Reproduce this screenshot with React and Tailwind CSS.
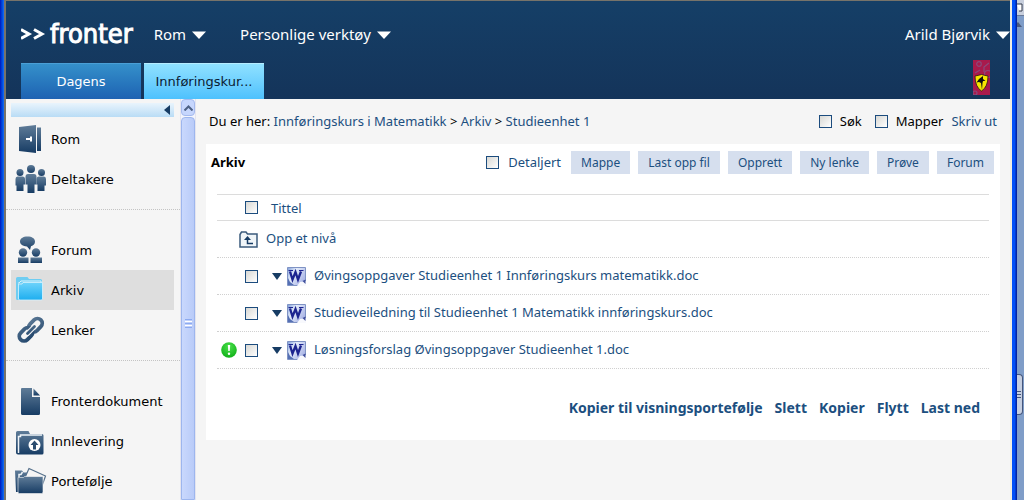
import React, { useState } from 'react'

const toolbarButtons = ['Mappe', 'Last opp fil', 'Opprett', 'Ny lenke', 'Prøve', 'Forum']

const files = [
  { id: 1, name: 'Øvingsoppgaver Studieenhet 1 Innføringskurs matematikk.doc', isNew: false },
  { id: 2, name: 'Studieveiledning til Studieenhet 1 Matematikk innføringskurs.doc', isNew: false },
  { id: 3, name: 'Løsningsforslag Øvingsoppgaver Studieenhet 1.doc', isNew: true },
]

const footerLinks = ['Kopier til visningsportefølje', 'Slett', 'Kopier', 'Flytt', 'Last ned']

const sidebarGroups = [
  [
    { label: 'Rom', icon: DoorIcon },
    { label: 'Deltakere', icon: PeopleIcon },
  ],
  [
    { label: 'Forum', icon: ForumIcon },
    { label: 'Arkiv', icon: FolderIcon, active: true },
    { label: 'Lenker', icon: ChainIcon },
  ],
  [
    { label: 'Fronterdokument', icon: DocumentIcon },
    { label: 'Innlevering', icon: HandInIcon },
    { label: 'Portefølje', icon: PortfolioIcon },
  ],
]

function DoorIcon() {
  return (
    <svg width="32" height="32" viewBox="0 0 32 32" fill="url(#steel)">
      <path d="M4 3 21 1v28L4 27z" />
      <path d="M22 3.500h4V27h-4z" />
      <path d="M11 14h4v-1.500h2v5h-2V16h-4z" fill="#fff" />
    </svg>
  )
}

function PeopleIcon() {
  return (
    <svg width="32" height="32" viewBox="0 0 32 32" fill="url(#steel)">
      <circle cx="5" cy="8.500" r="3.500" />
      <circle cx="26.500" cy="8.500" r="3.500" />
      <path d="M2.500 12.500h5Q10 12.500 10 15v5.500H8.500V27h-7v-5.500H.5V15Q.5 12.500 2.500 12.500z" />
      <path d="M24 12.500h5q2 0 2 2.500v6.500h-1.500V27h-7v-6.500H21.500V15Q21.500 12.500 24 12.500z" />
      <circle cx="16" cy="5" r="4" />
      <path d="M13 10h6q2.500 0 2.500 3v7.500h-2v8.500h-7v-8.500h-2V13q0-3 2.500-3z" />
    </svg>
  )
}

function ForumIcon() {
  return (
    <svg width="32" height="32" viewBox="0 0 32 32" fill="url(#steel)">
      <path d="M12.500 1.500c4.500 0 7.500 2 7.500 5 0 2.500-1.500 4-4 4.700L15 15l-3-3.500c-4-.2-7-2-7-5s3-5 7.500-5z" />
      <circle cx="8" cy="17.500" r="4.200" />
      <circle cx="21" cy="17.500" r="4.200" />
      <path d="M3 22.500h10.500V28H3z" />
      <path d="M15.500 22.500H27V28H15.500z" />
    </svg>
  )
}

function FolderIcon() {
  return (
    <svg width="32" height="32" viewBox="0 0 32 32">
      <path d="M1 3.500Q1 2 2.500 2h10L14 4h11.500Q27 4 27 5.500V25H2.500Q1 25 1 23.500z" fill="#6fcdf2" />
      <path d="M3 8h1l2-2h20v2" fill="none" stroke="#d9f3fd" />
      <path d="M4 9h3l1-1.500h19.500V24q0 1-1.500 1H5Q3.500 25 3.500 24V9z" fill="url(#sky)" stroke="#d9f3fd" strokeWidth="0.800" />
    </svg>
  )
}

function ChainIcon() {
  return (
    <svg width="32" height="32" viewBox="0 0 32 32" fill="none" stroke="url(#steelFlat)" strokeWidth="3.800" strokeLinecap="round">
      <rect x="13" y="5.500" width="15" height="9.500" rx="4.750" transform="rotate(-45 20.500 10.250)" />
      <rect x="3.500" y="14.500" width="15" height="9.500" rx="4.750" transform="rotate(-45 11 19.250)" />
      <path d="M12.500 18.500l7-7" stroke="#f5f5f5" strokeWidth="5" />
      <path d="M12.500 18.500l7-7" strokeWidth="2.800" />
    </svg>
  )
}

function DocumentIcon() {
  return (
    <svg width="32" height="32" viewBox="0 0 32 32" fill="url(#steel)">
      <path d="M7 2h10v9h8v16.500q0 1.500-1.500 1.500h-16Q6 29 6 27.500V3q0-1 1-1z" />
      <path d="M18.500 2.500 25 9.500h-6.500z" />
    </svg>
  )
}

function HandInIcon() {
  return (
    <svg width="32" height="32" viewBox="0 0 32 32">
      <path d="M1 6.500Q1 5 2.500 5h11L15 8h12q1.500 0 1.500 1.500V27q0 1.500-1.500 1.500H3q-2 0-2-2z" fill="url(#steel)" />
      <path d="M3.500 27V10.500h2V9h21.500" fill="none" stroke="#eef3f7" strokeWidth="1.500" />
      <circle cx="19.500" cy="19" r="6" fill="#fff" />
      <path d="M19.500 14.500l4 4.500h-2.500v4.500h-3V19h-2.500z" fill="#2b4d70" />
    </svg>
  )
}

function PortfolioIcon() {
  return (
    <svg width="32" height="32" viewBox="0 0 32 32">
      <path d="M0 4.500h7l1.500 2h5V26H1z" fill="url(#steel)" />
      <path d="M10 11.500l4-9L30.500 10 25.500 24" fill="#f5f5f5" stroke="#56718c" strokeWidth="1.200" />
      <path d="M4 11V8.500h2L7.500 6" fill="none" stroke="#eef3f7" strokeWidth="1.500" />
      <path d="M3 11.500h5.500l1-1H28V26q0 1.500-1.500 1.500h-22Q3 27.500 3 26z" fill="url(#steel)" stroke="#f5f5f5" strokeWidth="0.600" />
    </svg>
  )
}

function IconGradients() {
  return (
    <svg width="0" height="0" className="absolute" aria-hidden="true">
      <defs>
        <linearGradient id="steel" x1="0" y1="0" x2="0" y2="1">
          <stop offset="0" stopColor="#5f7c98" />
          <stop offset="1" stopColor="#173c64" />
        </linearGradient>
        <linearGradient id="steelFlat" gradientUnits="userSpaceOnUse" x1="0" y1="0" x2="0" y2="32">
          <stop offset="0" stopColor="#5f7c98" />
          <stop offset="1" stopColor="#173c64" />
        </linearGradient>
        <linearGradient id="sky" x1="0" y1="0" x2="0" y2="1">
          <stop offset="0" stopColor="#6dd3fb" />
          <stop offset="1" stopColor="#1eaeef" />
        </linearGradient>
        <linearGradient id="word" x1="0" y1="0" x2="1" y2="0.600">
          <stop offset="0" stopColor="#7d9cd8" />
          <stop offset="0.400" stopColor="#e4ecfa" />
          <stop offset="1" stopColor="#a9b4e6" />
        </linearGradient>
        <radialGradient id="alert" cx="0.500" cy="0.300" r="0.700">
          <stop offset="0" stopColor="#4be04b" />
          <stop offset="1" stopColor="#10b018" />
        </radialGradient>
      </defs>
    </svg>
  )
}

function WordIcon() {
  return (
    <svg width="19" height="19" viewBox="0 0 19 19" className="shrink-0">
      <path d="M.5.500h18v18H.5z" fill="url(#word)" stroke="#7f93c4" />
      <path d="M1 18V11l2 4 4 3z" fill="#5570b4" />
      <path d="M10 19l3-4 6-1v5z" fill="#f8f9fd" />
      <path d="M15.500 14l3-1.500V17z" fill="#3f4f9c" />
      <path d="M3 4.500l2.500 8L8.500 5l2.500 7.500L14 4.500" fill="none" stroke="#1d2590" strokeWidth="2.300" />
      <path d="M1.500 3.500H6M12 3.500h4.500" stroke="#1d2590" strokeWidth="1.200" />
    </svg>
  )
}

function AlertIcon() {
  return (
    <svg width="16" height="16" viewBox="0 0 16 16" role="img" aria-label="Ny">
      <circle cx="8" cy="8" r="7.800" fill="url(#alert)" />
      <path d="M6.800 3h2.400l-.5 6H7.300z" fill="#fff" />
      <circle cx="8" cy="11.700" r="1.200" fill="#fff" />
    </svg>
  )
}

function UpFolderIcon() {
  return (
    <svg width="19" height="17" viewBox="0 0 19 17" fill="none" stroke="#3b5b7c" className="shrink-0">
      <path d="M1 3.500 2.500 1H7l1.500 2H18v13H1z" fill="#f0f5f8" strokeWidth="1.500" />
      <path d="M8.500 7v5.500H14" stroke="#173c64" strokeWidth="1.500" />
      <path d="M5 9l3.500-4L12 9z" fill="#173c64" stroke="none" />
    </svg>
  )
}

function Caret() {
  return (
    <svg width="14" height="8" viewBox="0 0 14 8">
      <path d="M0 .5h14L7 8z" fill="currentColor" />
    </svg>
  )
}

function Crest() {
  return (
    <svg width="17" height="35" viewBox="0 0 17 35">
      <path d="M0 0h17v35H0z" fill="#a81a4c" />
      <g fill="none" stroke="#8a4a7c" strokeWidth="1.200">
        <circle cx="6" cy="4" r="2.300" />
        <circle cx="15" cy="14" r="3.500" />
        <circle cx="2" cy="33" r="2" />
        <path d="M16 3l-5 4v5M2 13l5-3" />
      </g>
      <path d="M2 16q3-.5 6.500-1.500Q12 15.500 15 16q0 11-6.500 15Q2 27 2 16z" fill="#f6e600" stroke="#2a1a10" strokeWidth="0.800" />
      <path d="M3.500 22.500L6 19l4-3v3l2.500 2H10l-.5 2L9 30l-1-7-2-1z" fill="#111" />
    </svg>
  )
}

function Checkbox({ id, ...props }) {
  return (
    <input
      id={id}
      type="checkbox"
      className="size-[13px] shrink-0 appearance-none border border-[#1c4c7e] bg-linear-to-br from-[#d8d8d4] to-white checked:bg-[#1c4c7e]"
      {...props}
    />
  )
}

function Header() {
  return (
    <header className="flex h-[99px] flex-col justify-between border-t border-[#77736a] bg-linear-to-b from-[#153f67] to-[#14345a] text-white">
      <div className="flex h-[62px] items-center pt-2 pl-[15px] font-['Noto_Sans',sans-serif] text-[15px]">
        <a href="#" className="flex items-center gap-1">
          <svg width="25" height="14" viewBox="0 0 25 14" fill="none" stroke="#fff" strokeWidth="3">
            <path d="M0 1.500 8 6l-8 4.500M13 1.500 21 6l-8 4.500" />
          </svg>
          <span className="pb-[2px] font-['DejaVu_Sans_Condensed','DejaVu_Sans',sans-serif] text-[27px] leading-8 [-webkit-text-stroke:1px_white]">fronter</span>
        </a>
        <nav className="ml-[21px] flex flex-1 items-center gap-[34px]">
          <button className="flex items-center gap-[6px]">Rom <Caret /></button>
          <button className="flex items-center gap-[6px]">Personlige verktøy <Caret /></button>
        </nav>
        <button className="flex items-center gap-[6px]">Arild Bjørvik <Caret /></button>
      </div>
      <div className="flex items-end justify-between pr-5 pl-[15px]">
        <nav className="flex gap-[3px] text-[13px]">
          <a href="#" className="flex h-9 w-[120px] items-center justify-center border-t border-[#4a9fd6] bg-linear-to-b from-[#3590ca] to-[#1e62b2]">
            Dagens
          </a>
          <a href="#" className="flex h-9 w-[120px] items-center justify-center border-t border-[#b5ecff] bg-linear-to-b from-[#8fe1ff] to-[#4dc1fd] text-[#0b1c33]">
            Innføringskur...
          </a>
        </nav>
        <div className="pb-1"><Crest /></div>
      </div>
    </header>
  )
}

function Sidebar() {
  return (
    <aside className="flex w-[190px] shrink-0">
      <div className="min-w-0 flex-1 pt-1">
        <div className="flex pr-[6px] pl-[5px]">
          <button aria-label="Skjul meny" className="flex h-[14px] flex-1 items-center justify-end bg-linear-to-b from-[#e9f4fc] to-[#b9dcf5] pr-1">
            <svg width="6" height="10" viewBox="0 0 6 10"><path d="M6 0v10L0 5z" fill="#173c64" /></svg>
          </button>
        </div>
        {sidebarGroups.map((group, i) => (
          <ul key={i} className="border-b border-dotted border-[#c4c4c4] pt-5 pr-[6px] pb-[10px] pl-[5px] first-of-type:pt-[2px]">
            {group.map(({ label, icon: Icon, active }) => (
              <li key={label}>
                <a
                  href="#"
                  className={`flex h-10 items-center gap-1 pt-[2px] pl-1 text-[13px] text-black ${active ? 'bg-[#dedede]' : ''}`}
                >
                  <Icon />
                  {label}
                </a>
              </li>
            ))}
          </ul>
        ))}
      </div>
      {/* Frame scrollbar */}
      <div className="flex w-4 flex-col border-x border-[#e4e4ee] bg-[#f3f5fd]">
        <div className="flex h-[17px] items-center justify-center rounded-sm border border-[#a5baee] bg-[#c6d6fd]">
          <svg width="9" height="6" viewBox="0 0 9 6" fill="none" stroke="#4d6185" strokeWidth="2"><path d="M.5 5.500l4-4 4 4" /></svg>
        </div>
        <div className="mt-px flex flex-1 flex-col items-center justify-center gap-px rounded-t-sm border border-[#9db6ee] bg-linear-to-r from-[#c9d8fd] to-[#b9cbf8] pt-[30px]">
          <span className="h-px w-[7px] bg-[#8caaf0]" />
          <span className="h-px w-[7px] bg-white" />
          <span className="h-px w-[7px] bg-[#8caaf0]" />
          <span className="h-px w-[7px] bg-white" />
          <span className="h-px w-[7px] bg-[#8caaf0]" />
        </div>
      </div>
    </aside>
  )
}

function FileTable() {
  const [selected, setSelected] = useState([])
  const toggle = id => setSelected(selected.includes(id) ? selected.filter(s => s !== id) : [...selected, id])
  const allSelected = selected.length === files.length

  return (
    <table className="w-full border-collapse text-left">
      <thead>
        <tr className="h-[26px] border-y border-[#dcdcdc]">
          <th className="w-[54px] pl-7">
            <div className="flex">
              <Checkbox
                aria-label="Velg alle"
                checked={allSelected}
                onChange={() => setSelected(allSelected ? [] : files.map(f => f.id))}
              />
            </div>
          </th>
          <th className="font-normal">Tittel</th>
        </tr>
      </thead>
      <tbody>
        <tr className="h-[37px] border-b border-dotted border-[#d0d0d0]">
          <td colSpan={2} className="pl-[22px]">
            <a href="#" className="flex items-center gap-2"><UpFolderIcon /> <span className="pb-[2px]">Opp et nivå</span></a>
          </td>
        </tr>
        {files.map(file => (
          <tr key={file.id} className="h-[37px] border-b border-dotted border-[#d0d0d0]">
            <td className="pl-1">
              <div className="flex items-center gap-2">
                <span className="w-4">{file.isNew && <AlertIcon />}</span>
                <Checkbox aria-label={file.name} checked={selected.includes(file.id)} onChange={() => toggle(file.id)} />
              </div>
            </td>
            <td>
              <div className="flex items-center">
                <button aria-label="Vis meny" className="mr-[5px] pl-px text-[#173c64]">
                  <svg width="10" height="7" viewBox="0 0 10 7"><path d="M0 0h10L5 7z" fill="currentColor" /></svg>
                </button>
                <WordIcon />
                <a href="#" className="ml-2 pb-[2px]">{file.name}</a>
              </div>
            </td>
          </tr>
        ))}
      </tbody>
    </table>
  )
}

function Archive() {
  return (
    <main className="min-w-0 flex-1 px-[10px] font-['Noto_Sans',sans-serif] text-[13px] leading-5 text-[#1c4f80]">
      <div className="flex h-[45px] items-center justify-between px-[3px]">
        <p className="pb-[2px] text-black">
          Du er her: <a href="#" className="text-[#1c4f80]">Innføringskurs i Matematikk</a> &gt;{' '}
          <a href="#" className="text-[#1c4f80]">Arkiv</a> &gt; <a href="#" className="text-[#1c4f80]">Studieenhet 1</a>
        </p>
        <div className="flex items-center text-black">
          <Checkbox id="search" />
          <label htmlFor="search" className="mr-[13px] ml-2 pb-[2px]">Søk</label>
          <Checkbox id="folders" />
          <label htmlFor="folders" className="mr-2 ml-2 pb-[2px]">Mapper</label>
          <a href="#" className="pb-[2px] text-[#1c4f80]">Skriv ut</a>
        </div>
      </div>

      <section className="bg-white pb-[22px]">
        <div className="flex h-[37px] items-center pr-[6px] pl-[5px]">
          <h1 className="flex-1 pb-[2px] font-bold text-black">Arkiv</h1>
          <Checkbox id="detailed" />
          <label htmlFor="detailed" className="mr-[10px] ml-[9px] pb-[2px]">Detaljert</label>
          <div className="flex gap-2">
            {toolbarButtons.map(label => (
              <button key={label} className="h-[23px] bg-[#d6dfee] px-[10px] text-[12px]">{label}</button>
            ))}
          </div>
        </div>
        <div className="px-[11px] pt-[13px]">
          <FileTable />
        </div>
        <div className="flex justify-end gap-3 pt-[29px] pr-5 text-[14px] leading-5 font-bold">
          {footerLinks.map(label => (
            <a key={label} href="#">{label}</a>
          ))}
        </div>
      </section>
    </main>
  )
}

export default function App() {
  return (
    <div className="flex h-screen overflow-hidden bg-[#f5f5f5] font-['DejaVu_Sans',sans-serif]">
      <IconGradients />
      {/* Window frame, left edge */}
      <div className="w-[6px] shrink-0 border-r-2 border-[#77736a] bg-linear-to-r from-[#0010c0] to-[#1a6cf5]" />
      <div className="flex min-w-0 flex-1 flex-col">
        <Header />
        <div className="flex min-h-0 flex-1">
          <Sidebar />
          <Archive />
        </div>
      </div>
      {/* Window frame, right edge */}
      <div className="w-[7px] shrink-0 border-l-2 border-[#efeee4] bg-linear-to-r from-[#0050f8] from-50% to-[#001890]" />
      <div className="flex w-[7px] shrink-0 flex-col bg-[#7f9dc8]">
        <div className="h-4 border-b border-[#6a7a98] bg-[#c8cfdd]">
          <svg width="7" height="13" viewBox="0 0 7 13"><path d="M0 4h5v7H2" fill="#fff" stroke="#333a4c" /></svg>
        </div>
        <svg width="7" height="12" viewBox="0 0 7 12"><path d="M0 7l1-1 4 5H0z" fill="#4a5a7c" /></svg>
        <div className="flex-1" />
        <div className="mr-px flex h-[41px] flex-col justify-center gap-[2px] rounded-r-sm border border-l-0 border-[#44557c] bg-[#c5cee0]">
          <span className="h-px w-1 bg-[#44557c]" />
          <span className="h-px w-1 bg-[#44557c]" />
          <span className="h-px w-1 bg-[#44557c]" />
        </div>
        <div className="h-[85px] shrink-0" />
      </div>
    </div>
  )
}
